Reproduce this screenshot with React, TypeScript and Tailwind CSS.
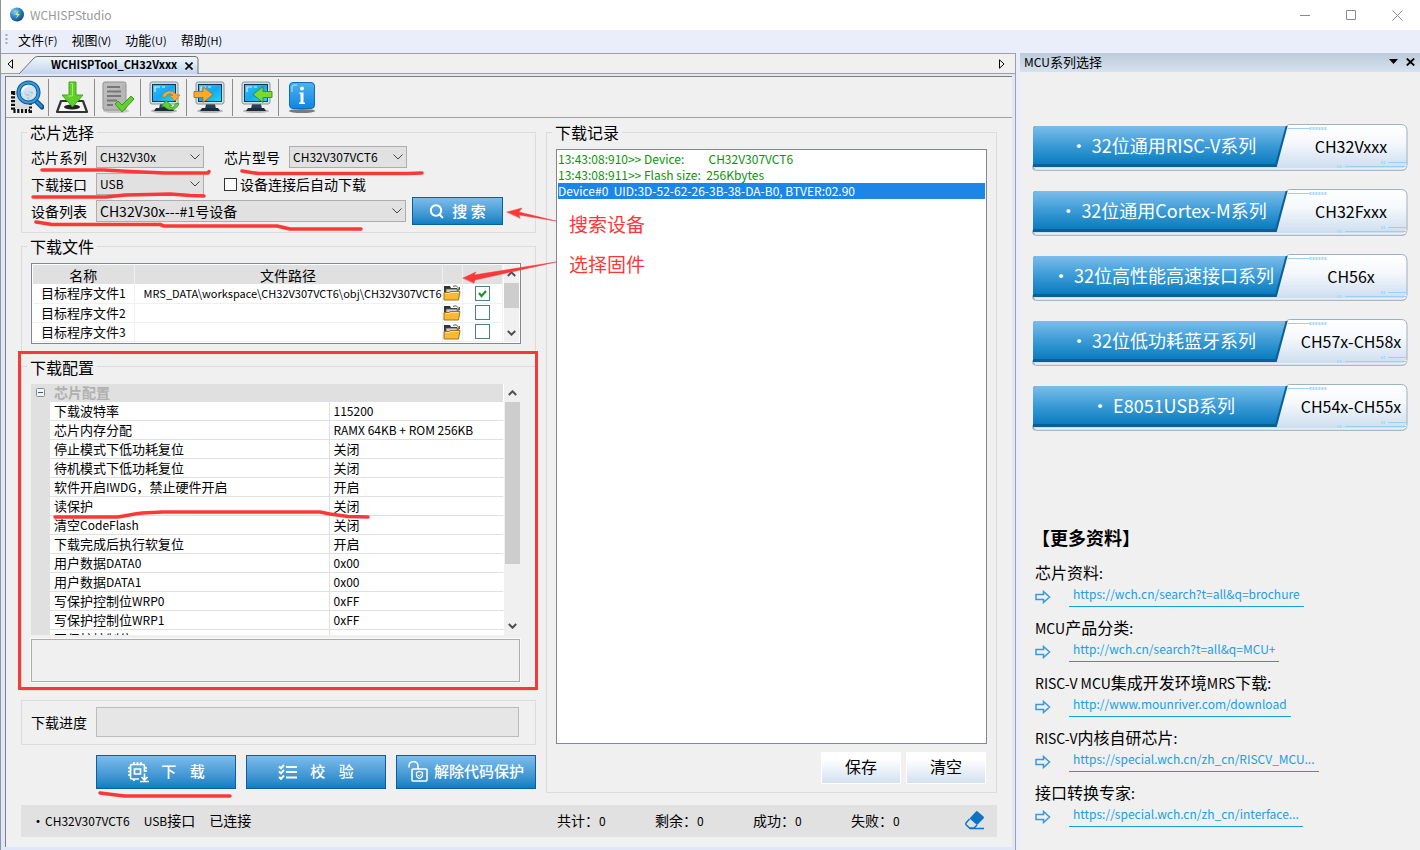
import React from 'react';

const MENUS = [
  { label: '文件', hotkey: '(F)' },
  { label: '视图', hotkey: '(V)' },
  { label: '功能', hotkey: '(U)' },
  { label: '帮助', hotkey: '(H)' },
];

const FILES = [
  { name: '目标程序文件1', path: 'MRS_DATA\\workspace\\CH32V307VCT6\\obj\\CH32V307VCT6', checked: true },
  { name: '目标程序文件2', path: '', checked: false },
  { name: '目标程序文件3', path: '', checked: false },
];

const CONFIG = [
  ['下载波特率', '115200'],
  ['芯片内存分配', 'RAMX 64KB + ROM 256KB'],
  ['停止模式下低功耗复位', '关闭'],
  ['待机模式下低功耗复位', '关闭'],
  ['软件开启IWDG，禁止硬件开启', '开启'],
  ['读保护', '关闭'],
  ['清空CodeFlash', '关闭'],
  ['下载完成后执行软复位', '开启'],
  ['用户数据DATA0', '0x00'],
  ['用户数据DATA1', '0x00'],
  ['写保护控制位WRP0', '0xFF'],
  ['写保护控制位WRP1', '0xFF'],
  ['写保护控制位', ''],
];

const COUNTERS = ['共计：0', '剩余：0', '成功：0', '失败：0'];

const SERIES = [
  { title: '· 32位通用RISC-V系列', chip: 'CH32Vxxx' },
  { title: '· 32位通用Cortex-M系列', chip: 'CH32Fxxx' },
  { title: '· 32位高性能高速接口系列', chip: 'CH56x' },
  { title: '· 32位低功耗蓝牙系列', chip: 'CH57x-CH58x' },
  { title: '· E8051USB系列', chip: 'CH54x-CH55x' },
];

const LINKS = [
  { title: '芯片资料:', url: 'https://wch.cn/search?t=all&q=brochure' },
  { title: 'MCU产品分类:', url: 'http://wch.cn/search?t=all&q=MCU+' },
  { title: 'RISC-V MCU集成开发环境MRS下载:', url: 'http://www.mounriver.com/download' },
  { title: 'RISC-V内核自研芯片:', url: 'https://special.wch.cn/zh_cn/RISCV_MCU...' },
  { title: '接口转换专家:', url: 'https://special.wch.cn/zh_cn/interface...' },
];

const BLUE_BUTTON =
  'flex items-center justify-center border border-[#0a609f] bg-linear-to-b from-[#7cbcec] to-[#0680c2] text-[15px] font-medium text-white';

// Latin runs are set one step smaller than the Chinese text around them
const Mixed: React.FC<{ text: string; latin?: string }> = ({ text, latin = 'text-[12px]' }) => (
  <>
    {text.split(/([\x20-\x7e]+)/).map((part, i) =>
      i % 2 ? <span key={i} className={latin}>{part}</span> : part
    )}
  </>
);

/* ---------- icons ---------- */

const Monitor: React.FC<{ children: React.ReactNode }> = ({ children }) => (
  <svg width="34" height="34" viewBox="0 0 34 34">
    <defs>
      <linearGradient id="screen" x1="0" y1="0" x2="1" y2="1">
        <stop offset="0" stopColor="#3cc4f8" />
        <stop offset="0.500" stopColor="#12a8f4" />
        <stop offset="1" stopColor="#18dcf6" />
      </linearGradient>
    </defs>
    <ellipse cx="17" cy="31" rx="13" ry="2" fill="#b5b5b5" />
    <path d="M13 24h9l1 5H12z" fill="#274058" />
    <path d="M9 28h16l2 3H7z" fill="#1c2c3c" />
    <rect x="3" y="2" width="28" height="22" rx="2" fill="#d4dde2" stroke="#8494a0" />
    <rect x="5.500" y="4.500" width="23" height="17" fill="url(#screen)" stroke="#12364c" />
    <path d="M8 12V7h5M15 7h3" stroke="#d5f6ff" strokeWidth="1.200" fill="none" />
    {children}
  </svg>
);

const SearchChipIcon = () => (
  <svg width="34" height="34" viewBox="0 0 34 34">
    <rect x="3" y="13" width="17" height="18" fill="none" stroke="#111" strokeWidth="4" strokeDasharray="2.200 1.600" />
    <rect x="5" y="15" width="14" height="14" fill="#d9dde0" />
    <path d="M25 20l7 7" stroke="#0d4f8c" strokeWidth="5" strokeLinecap="round" />
    <path d="M26 21l5.500 5.500" stroke="#2b8bd0" strokeWidth="2.500" strokeLinecap="round" />
    <circle cx="18.500" cy="12.500" r="10" fill="#cfe3ee" fillOpacity="0.95" stroke="#0d4f8c" strokeWidth="4" />
    <circle cx="18.500" cy="12.500" r="10" fill="none" stroke="#2f9be0" strokeWidth="2.200" />
    <path d="M12 12a7 7 0 0 1 6-6" stroke="#fff" strokeWidth="1.500" fill="none" />
    <path d="M16 15h3M21 13h2M17 18h2" stroke="#98b0bf" />
  </svg>
);

const DownloadIcon = () => (
  <svg width="34" height="34" viewBox="0 0 34 34">
    <path d="M6 21h22l4 11H2z" fill="#f4f4f4" stroke="#333" strokeWidth="2.200" strokeLinejoin="round" />
    <ellipse cx="17" cy="27" rx="8" ry="2.500" fill="#222" />
    <path d="M14 2h7v13h7L17.500 27 7 15h7z" fill="#5fd02a" stroke="#45a51c" />
    <path d="M15.500 3.500h2V16h-5" stroke="#a2ec72" fill="none" />
  </svg>
);

const VerifyIcon = () => (
  <svg width="34" height="34" viewBox="0 0 34 34">
    <ellipse cx="15" cy="31" rx="13" ry="2" fill="#c5c5c5" />
    <rect x="2" y="2" width="23" height="28" rx="2" fill="#bdbdbd" stroke="#8f8f8f" />
    <path d="M3 20L24 3v26H3z" fill="#b0b0b0" opacity="0.5" />
    <path d="M6 7h13M6 11.500h14M6 16h14M6 20.500h10M6 25h6" stroke="#777" strokeWidth="2" />
    <path d="M14 24l3-3 4 4 9-9 3 3-12 13z" fill="#62cf2e" stroke="#3f9a1b" strokeLinejoin="round" />
  </svg>
);

const InfoIcon = () => (
  <svg width="34" height="34" viewBox="0 0 34 34">
    <defs>
      <linearGradient id="info" x1="0" y1="0" x2="0" y2="1">
        <stop offset="0" stopColor="#4cb2ee" />
        <stop offset="1" stopColor="#0f86e0" />
      </linearGradient>
    </defs>
    <ellipse cx="17" cy="31" rx="13" ry="2" fill="#7a7a7a" />
    <rect x="4.500" y="2.500" width="25" height="26" rx="3.500" fill="url(#info)" stroke="#0d6cbc" />
    <path d="M7 12V7q0-2 2-2h3" stroke="#b9e4ff" fill="none" />
    <circle cx="17" cy="8.500" r="2" fill="#fff" />
    <path d="M14.500 12.500h4v10h1.500v1.500h-6v-1.500h1.500v-8.500h-1z" fill="#fff" />
  </svg>
);

const TOOLS = [
  { name: '搜索', icon: <SearchChipIcon /> },
  { name: '下载', icon: <DownloadIcon /> },
  { name: '校验', icon: <VerifyIcon /> },
  {
    name: '刷新',
    icon: (
      <Monitor>
        <path d="M15 17c2-7 11-8 14.500-2H33l-5 6-5.500-5.500H26c-2.500-3-6-2-7.500 1.500z" fill="#f9a83a" stroke="#c47a1c" strokeWidth="0.800" strokeLinejoin="round" />
        <path d="M32 23.500c-2 7-11 8-14.500 3H14.500l4.500-6 6 5.500H22c2 2.500 5 1.500 6.500-2.500z" fill="#5fcf3a" stroke="#3f9a28" strokeWidth="0.800" strokeLinejoin="round" />
      </Monitor>
    ),
  },
  {
    name: '导入',
    icon: (
      <Monitor>
        <path d="M1 11.500h9V6.500l10 8-10 8v-5H1z" fill="#fba92c" stroke="#b86c0b" strokeWidth="0.900" />
      </Monitor>
    ),
  },
  {
    name: '导出',
    icon: (
      <Monitor>
        <path d="M33 11.500h-9V6.500l-10 8 10 8v-5h9z" fill="#78d838" stroke="#3a8d18" strokeWidth="0.900" />
      </Monitor>
    ),
  },
  { name: '关于', icon: <InfoIcon /> },
];

const FolderIcon = () => (
  <svg width="18" height="16" viewBox="0 0 18 16">
    <path d="M1 1h6l1 2h6v4H1z" fill="#333" />
    <path d="M3 4h12v4H3z" fill="#c9d0d6" stroke="#555" strokeWidth="0.800" />
    <path d="M10 1.500c3-1.500 5 0 6 3M16.500 2v3h-3" stroke="#555" fill="none" />
    <path d="M1 15V7.500h5l1-1h10L15.500 15z" fill="#f9b934" stroke="#a8700c" />
    <path d="M2.500 8.500h4l1-1h8" stroke="#ffe39a" fill="none" />
  </svg>
);

const Chevron: React.FC<{ up?: boolean }> = ({ up }) => (
  <svg width="9" height="6" viewBox="0 0 9 6" fill="none" stroke="#505050" strokeWidth="2">
    <path d={up ? 'M0.800 5L4.500 1.300 8.200 5' : 'M0.800 1L4.500 4.700 8.200 1'} />
  </svg>
);

/* ---------- controls ---------- */

const Select: React.FC<{ id: string; value: string; className: string }> = ({ id, value, className }) => (
  <div className="relative">
    <select
      id={id}
      defaultValue={value}
      className={`h-[22px] appearance-none border border-[#adadad] bg-[#e1e1e1] pl-[3px] leading-5 ${className}`}
    >
      <option>{value}</option>
    </select>
    <svg className="pointer-events-none absolute right-1 top-2" width="10" height="6" viewBox="0 0 10 6" fill="none" stroke="#444">
      <path d="M0.500 0.500L5 5l4.500-4.500" />
    </svg>
  </div>
);

const Group: React.FC<{ title: string; className: string; children: React.ReactNode }> = ({ title, className, children }) => (
  <fieldset className={`min-w-0 border border-[#dcdcdc] px-[9px] ${className}`}>
    <legend className="-ml-1 px-[3px] text-[16px] leading-4">{title}</legend>
    {children}
  </fieldset>
);

const Scrollbar: React.FC<{ thumb: string }> = ({ thumb }) => (
  <div className="flex w-4 flex-col items-center bg-[#f0f0f0]">
    <div className="flex h-[18px] items-center"><Chevron up /></div>
    <div className={`w-[15px] bg-[#cdcdcd] ${thumb}`} />
    <div className="mt-auto flex h-[18px] items-center"><Chevron /></div>
  </div>
);

const ChipSelect = () => (
  <Group title="芯片选择" className="pt-1.5 pb-[10px]">
    <div className="flex flex-col gap-[5px] text-[14px]">
      <div className="flex h-[22px] items-center">
        <label htmlFor="series" className="w-[65px]">芯片系列</label>
        <Select id="series" value="CH32V30x" className="w-[108px] text-[12px]" />
        <label htmlFor="model" className="ml-5 w-[65px]">芯片型号</label>
        <Select id="model" value="CH32V307VCT6" className="w-[118px] text-[12px]" />
      </div>
      <div className="flex h-[22px] items-center">
        <label htmlFor="port" className="w-[65px]">下载接口</label>
        <Select id="port" value="USB" className="w-[108px] text-[12px]" />
        <input id="auto" type="checkbox" className="ml-5 size-[13px] appearance-none border border-[#333] bg-white" />
        <label htmlFor="auto" className="ml-[3px]">设备连接后自动下载</label>
      </div>
      <div className="flex h-[22px] items-center">
        <label htmlFor="device" className="w-[65px]">设备列表</label>
        <Select id="device" value="CH32V30x---#1号设备" className="w-[310px] text-[14px]" />
        <button className={`ml-1.5 h-7 w-[91px] gap-2 ${BLUE_BUTTON}`}>
          <svg width="15" height="15" viewBox="0 0 15 15" fill="none" stroke="#fff" strokeWidth="2">
            <circle cx="7" cy="6.500" r="5.200" />
            <path d="M10.500 10.500L14 14" />
          </svg>
          <span className="whitespace-pre">搜 索</span>
        </button>
      </div>
    </div>
  </Group>
);

const FileTable = () => (
  <Group title="下载文件" className="mt-[5px] pt-[9px] pb-2">
    <div className="mr-[5px] flex gap-px border border-[#828790] bg-white p-px">
      <table className="w-full table-fixed border-collapse">
        <thead>
          <tr className="h-[19px] bg-[#e0e0e0] text-[14px] leading-[18px]">
            <th className="w-[101px] border-r border-[#f0f0f0] font-normal">名称</th>
            <th className="border-r border-[#f0f0f0] font-normal">文件路径</th>
            <th className="w-[20px] border-r border-[#f0f0f0]" />
            <th className="w-[40px] border-r border-[#f0f0f0]" />
          </tr>
        </thead>
        <tbody>
          {FILES.map((file) => (
            <tr key={file.name} className="h-[19px] text-[13px] leading-[18px]">
              <td className="border-r border-b border-[#f0f0f0] text-center"><Mixed text={file.name} /></td>
              <td className="border-r border-b border-[#f0f0f0]">
                <div className="flex justify-end overflow-hidden text-[11px] whitespace-nowrap">{file.path}</div>
              </td>
              <td className="border-r border-b border-[#f0f0f0]">
                <button className="block" aria-label="选择文件"><FolderIcon /></button>
              </td>
              <td className="border-r border-b border-[#f0f0f0]">
                <div className="relative mx-auto size-[15px]">
                  <input
                    type="checkbox"
                    aria-label={file.name}
                    defaultChecked={file.checked}
                    className="peer block size-[15px] appearance-none border border-[#4f7f86] bg-white"
                  />
                  <svg className="pointer-events-none absolute top-1 left-[3px] hidden peer-checked:block" width="9" height="8" viewBox="0 0 9 8" fill="none" stroke="#22952a" strokeWidth="2.200">
                    <path d="M1 3l2.500 3L8 1" />
                  </svg>
                </div>
              </td>
            </tr>
          ))}
        </tbody>
      </table>
      <Scrollbar thumb="h-[25px]" />
    </div>
  </Group>
);

const ConfigTable = () => (
  <Group title="下载配置" className="mt-1.5 pt-[9px] pb-2">
    <div className="mr-[6px] flex h-[251px] gap-px overflow-hidden bg-white">
      <div className="flex-1 overflow-hidden">
        <div className="flex h-[18px] items-center bg-[#e0e0e0] text-[14px] font-bold text-[#b0b0b0]">
          <svg className="mx-[5px]" width="9" height="9" viewBox="0 0 9 9" fill="none">
            <rect x="0.500" y="0.500" width="8" height="8" rx="1" fill="#f4f4f4" stroke="#8a8a8a" />
            <path d="M2 4.500h5" stroke="#3a5fae" />
          </svg>
          <span className="ml-1">芯片配置</span>
        </div>
        <table className="w-full table-fixed border-collapse text-[13px] leading-[18px]">
          <tbody>
            {CONFIG.map(([name, value]) => (
              <tr key={name} className="h-[19px]">
                <td className="w-[19px] bg-[#e0e0e0]" />
                <td className="w-[279px] border-r border-b border-[#e0e0e0] pl-1"><Mixed text={name} /></td>
                <td className="border-b border-[#e0e0e0] pl-1"><Mixed text={value} /></td>
              </tr>
            ))}
          </tbody>
        </table>
      </div>
      <Scrollbar thumb="h-[162px]" />
    </div>
    <div className="mt-1 mr-[6px] h-[43px] border border-[#adadad] shadow-[0_0_0_1px_#fafafa]" />
  </Group>
);

const Actions = () => (
  <div className="mt-[10px] flex gap-[10px] pl-[75px]">
    <button className={`h-[34px] flex-1 gap-3 ${BLUE_BUTTON}`}>
      <svg width="22" height="22" viewBox="0 0 22 22" fill="none" stroke="#fff" strokeWidth="1.700">
        <path d="M12 18H5a1.500 1.500 0 0 1-1.500-1.500V5A1.500 1.500 0 0 1 5 3.500h11A1.500 1.500 0 0 1 17.500 5v6M7.500 8h6v5h-6z" />
        <path d="M7 3.500V1M10.500 3.500V1M14 3.500V1M3.500 7H1M3.500 10.500H1M3.500 14H1M17.500 7H20M17.500 10H20M7 18v2M17.500 12.500v6M14.500 16l3 3 3-3M13 20.500h9" />
      </svg>
      <span className="whitespace-pre">下    载</span>
    </button>
    <button className={`h-[34px] flex-1 gap-3 ${BLUE_BUTTON}`}>
      <svg width="20" height="16" viewBox="0 0 20 16" fill="none" stroke="#fff" strokeWidth="2">
        <path d="M8 3h11M8 8h11M8 13.500h11M1 2.500l2 1.800L6 1M1 7.500l2 1.800L6 6M1 13l2 1.800L6 11.500" />
      </svg>
      <span className="whitespace-pre">校    验</span>
    </button>
    <button className={`h-[34px] flex-1 gap-1.5 ${BLUE_BUTTON}`}>
      <svg width="20" height="21" viewBox="0 0 20 21" fill="none" stroke="#fff" strokeWidth="1.500">
        <path d="M1 6.500V5a4.500 4.500 0 0 1 9 0v3" />
        <rect x="4" y="8" width="15" height="12" rx="1" />
        <path d="M11.500 10.500l3 1v2.500c0 2-1.500 3-3 3.500-1.500-.5-3-1.500-3-3.500v-2.500z" strokeWidth="1.200" />
        <path d="M10 14l1.200 1.200L13.500 13" strokeWidth="1" />
      </svg>
      解除代码保护
    </button>
  </div>
);

const LogPanel = () => (
  <fieldset className="flex min-w-0 flex-1 flex-col border border-[#dcdcdc] px-[9px] pt-[9px] pb-2">
    <legend className="-ml-1 px-[3px] text-[16px] leading-4">下载记录</legend>
    <div className="flex-1 border border-[#828790] bg-white p-px text-[12px] leading-4 whitespace-pre">
      <p className="text-[#089408]">{'13:43:08:910>> Device:         CH32V307VCT6'}</p>
      <p className="text-[#089408]">{'13:43:08:911>> Flash size:  256Kbytes'}</p>
      <p className="bg-[#1c86e8] text-white">{'Device#0  UID:3D-52-62-26-3B-38-DA-B0, BTVER:02.90'}</p>
    </div>
    <div className="mt-2 mr-px flex justify-end gap-[5px]">
      {['保存', '清空'].map((label) => (
        <button key={label} className="h-8 w-20 border border-white bg-linear-to-b from-white from-20% to-[#d3e1f0] pb-1 text-[16px] leading-6">
          {label}
        </button>
      ))}
    </div>
  </fieldset>
);

const StatusBar = () => (
  <div className="mt-3 flex h-8 items-center bg-[#e1e1e1] pb-0.5 text-[14px] leading-5">
    <div className="flex w-[536px] gap-[14px] pl-[10px]">
      <span>·<span className="text-[12px]">CH32V307VCT6</span></span>
      <span><Mixed text="USB接口" /></span>
      <span>已连接</span>
    </div>
    {COUNTERS.map((text) => (
      <span key={text} className="w-[98px]"><Mixed text={text} /></span>
    ))}
    <button className="ml-auto mr-3" aria-label="清除">
      <svg width="20" height="20" viewBox="0 0 20 20">
        <path d="M12 1l6.500 5.500q1 1 0 2L12 15 4.500 8.500 11 1.500q.5-.8 1-.5z" fill="#0b72c4" />
        <path d="M4.500 9L1 13q-.5 1 .3 2L4.500 18H9l3-3M4.500 18.500H19" fill="none" stroke="#0b72c4" strokeWidth="1.400" />
      </svg>
    </button>
  </div>
);

const TabStrip = () => (
  <div className="flex h-[21px] items-center border-t border-r border-b border-[#a0a0a0] bg-[#f0f0f0]">
    <button className="pl-1.5" aria-label="向左">
      <svg width="6" height="10" viewBox="0 0 6 10"><path d="M5.500 0.800v8.400L1 5z" fill="#fff" stroke="#000" /></svg>
    </button>
    <div className="relative ml-1.5 flex h-full w-[180px] items-center pl-8">
      <svg className="absolute top-[2px] left-0" width="180" height="18" viewBox="0 0 180 18">
        <defs>
          <linearGradient id="tab" x1="0" y1="0" x2="0" y2="1">
            <stop offset="0" stopColor="#eef8fb" />
            <stop offset="1" stopColor="#c3d3ef" />
          </linearGradient>
        </defs>
        <path d="M0 18L15 2q1.500-1.500 4-1.500h157q3 0 3 3V18" fill="url(#tab)" stroke="#707070" />
      </svg>
      <button className="relative text-[11px] leading-4 font-bold">WCHISPTool_CH32Vxxx</button>
      <button className="relative ml-auto mt-1 mr-1.5" aria-label="关闭标签">
        <svg width="8" height="8" viewBox="0 0 8 8" stroke="#000" strokeWidth="1.600"><path d="M0.500 0.500l7 7M7.500 0.500l-7 7" /></svg>
      </button>
    </div>
    <button className="ml-auto mr-[10px]" aria-label="向右">
      <svg width="6" height="10" viewBox="0 0 6 10"><path d="M0.500 0.800v8.400L5 5z" fill="#fff" stroke="#000" /></svg>
    </button>
  </div>
);

const Banner: React.FC<{ title: string; chip: string }> = ({ title, chip }) => (
  <button className="relative flex h-12 w-full items-center">
    <svg className="absolute inset-0 h-full w-full" viewBox="0 0 378 48" preserveAspectRatio="none">
      <defs>
        <linearGradient id="blue" x1="0" y1="0" x2="0" y2="1">
          <stop offset="0" stopColor="#7cbdec" />
          <stop offset="0.500" stopColor="#3d9cd6" />
          <stop offset="1" stopColor="#0a7cbe" />
        </linearGradient>
        <linearGradient id="pale" x1="0" y1="0" x2="0" y2="1">
          <stop offset="0" stopColor="#ffffff" />
          <stop offset="0.400" stopColor="#f5f8fc" />
          <stop offset="1" stopColor="#cbdcef" />
        </linearGradient>
      </defs>
      <path d="M1 41h244L256 3q.5-2 3-2h112q6 0 6 6v35q0 5-6 5H5q-5 0-5-4z" fill="#b4c0cb" />
      <path d="M1 41h244L256 2.500q.5-2 3-2h112q6 0 6 6v34q0 5.500-6 5.500H5q-4 0-4-4z" fill="url(#pale)" stroke="#9fb0c0" />
      <path d="M3 45h368q5 0 5-4" fill="none" stroke="#fff" strokeWidth="1.200" />
      <path d="M1 5q0-3 3-3h253l-11 41H1z" fill="#0b5f99" />
      <path d="M1 5q0-3 3-3h251l-10.500 38H1z" fill="url(#blue)" />
      <path d="M257 4.500h22M315 42.500h61M358 38.500h18" stroke="#9bd0f5" />
      <path d="M279 4.500h17" stroke="#a9d8f8" strokeWidth="3" strokeDasharray="2 1" />
      <path d="M307 42.500h4M351 38.500h4" stroke="#a9d8f8" strokeWidth="3" strokeDasharray="1.500 1" />
    </svg>
    <span className="relative w-[262px] pb-1.5 text-[18px] leading-6 text-white">{title}</span>
    <span className="relative flex-1 pb-1 text-[16px] leading-6">{chip}</span>
  </button>
);

const Sidebar = () => (
  <aside className="w-[400px] bg-[#f0f0f0]">
    <header className="flex h-[19px] items-center bg-linear-to-b from-[#bccbda] to-[#d6e2ef] pr-[5px] pb-0.5 pl-1 text-[13px] leading-4">
      <h2><Mixed text="MCU系列选择" /></h2>
      <button className="ml-auto" aria-label="菜单">
        <svg width="9" height="5" viewBox="0 0 9 5"><path d="M0 0h9L4.500 5z" /></svg>
      </button>
      <button className="ml-2" aria-label="关闭">
        <svg width="9" height="8" viewBox="0 0 9 8" stroke="#000" strokeWidth="1.800"><path d="M0.800 0.500l7.400 7M8.200 0.500l-7.400 7" /></svg>
      </button>
    </header>
    <div className="flex flex-col gap-[17px] px-3 pt-[52px]">
      {SERIES.map((item) => <Banner key={item.chip} {...item} />)}
    </div>
    <h2 className="mt-[91px] pl-3 text-[18px] leading-7 font-bold">【更多资料】</h2>
    <ul className="mt-[9px] flex flex-col gap-2 pl-[15px]">
      {LINKS.map((link) => (
        <li key={link.url}>
          <h3 className="h-6 text-[16px] leading-6"><Mixed text={link.title} latin="text-[14px]" /></h3>
          <div className="flex h-[23px]">
            <svg className="mt-1.5" width="16" height="14" viewBox="0 0 16 14" fill="none" stroke="#3a9ad9" strokeWidth="1.500">
              <path d="M1 4.500h7.500V1.500L14.500 7l-6 5.500V9.500H1z" />
            </svg>
            <a href="#" className="ml-[18px] border-b border-[#169fe6] px-1 text-[12px] leading-5 text-[#169fe6]">{link.url}</a>
          </div>
        </li>
      ))}
    </ul>
  </aside>
);

// Hand-drawn red notes lying over the window
const Notes = () => (
  <div className="pointer-events-none absolute top-0 -left-px text-[19px] leading-6 text-[#fb3838]">
    <svg width="700" height="850" viewBox="0 0 700 850" fill="none" stroke="#fb3838" strokeWidth="3.500" strokeLinecap="round" strokeLinejoin="round">
      <path d="M42 170H104L130 171.500L165 173H208L209 171.500" />
      <path d="M33 197H106L125 195L150 194.500L170 194L190 195.500L204 196" />
      <path d="M242 171L258 173.500H408L422 173" />
      <path d="M36 222L52 224.500H160L164 226H277L290 229H361" />
      <path d="M55 517H118L135 514L142 513L163 512H320L330 514L348 516.500L368 517" />
      <path d="M100 793L112 794.500L125 796H230" />
      <path d="M19.500 352.500H536.500V688.500H19.500z" strokeWidth="3" strokeLinejoin="miter" />
      <path d="M507 212L522 208L519 212L556 221L519 215L520 218z" fill="#fb3838" strokeWidth="0.500" />
      <path d="M463 278L476 272L474 275L556 262L475 280L474 283z" fill="#fb3838" strokeWidth="0.500" />
    </svg>
    <span className="absolute top-[212px] left-[569px] whitespace-nowrap">搜索设备</span>
    <span className="absolute top-[252px] left-[569px] whitespace-nowrap">选择固件</span>
  </div>
);

const App: React.FC = () => {
  return (
    <div className="relative flex min-h-screen flex-col border-l border-[#8d979c] bg-[#eaeefb] font-['Noto_Sans_CJK_SC',sans-serif] text-black">
      <header className="flex h-[30px] items-center bg-white pl-2 text-[12px] text-[#999]">
        <svg width="16" height="16" viewBox="0 0 16 16">
          <defs>
            <radialGradient id="globe" cx="0.350" cy="0.300" r="0.800">
              <stop offset="0" stopColor="#8fd0f5" />
              <stop offset="0.500" stopColor="#2a7fc4" />
              <stop offset="1" stopColor="#0b3f80" />
            </radialGradient>
          </defs>
          <circle cx="8" cy="7.500" r="7" fill="url(#globe)" />
          <path d="M9.500 3L6 8h2.500L6.500 12 11 7H8.500z" fill="#d8f060" />
        </svg>
        <h1 className="ml-[5px] flex-1">WCHISPStudio</h1>
        <button className="w-[46px]" aria-label="最小化">
          <svg className="mx-auto" width="10" height="10" viewBox="0 0 10 10" stroke="#8a8a8a"><path d="M0 5.500h10" /></svg>
        </button>
        <button className="w-[46px]" aria-label="最大化">
          <svg className="mx-auto" width="10" height="10" viewBox="0 0 10 10" fill="none" stroke="#8a8a8a"><path d="M0.500 0.500h9v9h-9z" /></svg>
        </button>
        <button className="w-[46px]" aria-label="关闭窗口">
          <svg className="mx-auto" width="11" height="11" viewBox="0 0 11 11" stroke="#8a8a8a"><path d="M0.500 0.500l10 10M10.500 0.500l-10 10" /></svg>
        </button>
      </header>

      <nav className="flex h-[23px] items-center gap-[14px] pb-1 pl-1 text-[13px] leading-5">
        <svg className="-mr-1" width="3" height="12" viewBox="0 0 3 12" stroke="#a5a8b4" strokeWidth="2"><path d="M1.500 0v12" strokeDasharray="2 2" /></svg>
        {MENUS.map((menu) => (
          <button key={menu.label}>{menu.label}<span className="text-[11px]">{menu.hotkey}</span></button>
        ))}
      </nav>

      <div className="flex flex-1 gap-1">
        <main className="flex min-w-0 flex-1 flex-col">
          <TabStrip />
          <div className="flex flex-1 flex-col border-r border-[#a0a0a0] bg-[#dfe7f8] pt-[2px] pr-[3px] pb-[3px] pl-1">
            <div className="flex flex-1 flex-col border-t border-l border-[#808080] bg-[#f0f0f0]">
              <div className="flex h-[41px] items-center border-b border-[#a0a0a0]">
                {TOOLS.map((tool) => (
                  <button
                    key={tool.name}
                    aria-label={tool.name}
                    className="flex h-[37px] w-[46px] items-center justify-center border-r border-[#8c8c8c] first:w-[43px] last:border-r-0"
                  >
                    {tool.icon}
                  </button>
                ))}
              </div>
              <div className="flex flex-1 flex-col pt-1.5 pr-[15px] pb-[10px] pl-[15px]">
                <div className="flex flex-1 gap-[10px]">
                  <div className="w-[515px]">
                    <ChipSelect />
                    <FileTable />
                    <ConfigTable />
                    <div className="mt-[9px] flex h-[45px] items-center border border-[#dcdcdc] px-[9px]">
                      <span className="w-[65px] text-[14px]">下载进度</span>
                      <div role="progressbar" aria-label="下载进度" className="mr-[7px] h-[30px] flex-1 border border-[#bcbcbc] bg-[#e6e6e6]" />
                    </div>
                    <Actions />
                  </div>
                  <LogPanel />
                </div>
                <StatusBar />
              </div>
            </div>
          </div>
        </main>
        <Sidebar />
      </div>
      <Notes />
    </div>
  );
};

export default App;
